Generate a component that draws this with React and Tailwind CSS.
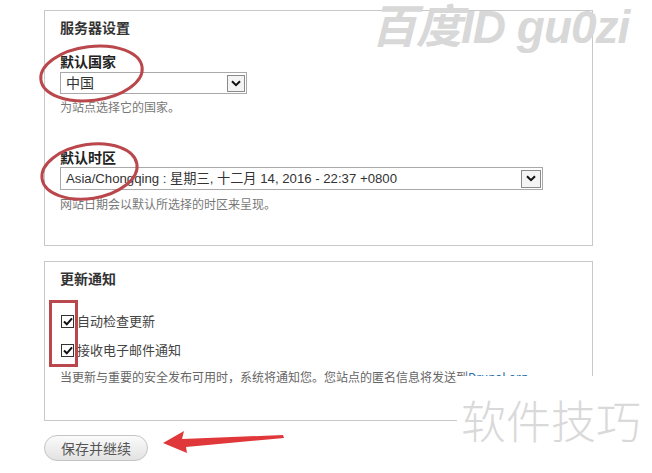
import React from "react";

function Chevron() {
  return (
    <svg width="10" height="7" viewBox="0 0 10 7">
      <path d="M1 1.2 L5 5.2 L9 1.2" fill="none" stroke="#111" strokeWidth="2" />
    </svg>
  );
}

function Select({ width, height, text, arrowW, small }) {
  return (
    <div
      className="flex items-center justify-between border border-[#a9a9a9] bg-white pl-[5px] pr-[1px]"
      style={{ width, height }}
    >
      <span
        className={
          small
            ? "text-[13.2px] leading-[18px] text-[#333] font-['Liberation_Sans','Noto_Sans_CJK_SC',sans-serif] whitespace-nowrap"
            : "text-[14px] leading-[18px] text-[#333] font-['Liberation_Sans','Noto_Sans_CJK_SC',sans-serif] whitespace-nowrap"
        }
      >
        {text}
      </span>
      <span
        className="flex items-center justify-center border border-[#8a8a8a] bg-[#f4f4f4]"
        style={{ width: arrowW, height: height - 5 }}
      >
        <Chevron />
      </span>
    </div>
  );
}

function Checkbox({ label }) {
  return (
    <div className="flex h-[20px] items-center">
      <span className="ml-[1px] flex h-[13px] w-[13px] items-center justify-center border border-[#333] bg-white">
        <svg width="10" height="9" viewBox="0 0 10 9">
          <path d="M1 4.5 L3.8 7.3 L9 1.3" fill="none" stroke="#111" strokeWidth="2" />
        </svg>
      </span>
      <span className="ml-[3px] text-[13px] leading-[20px] text-[#444]">{label}</span>
    </div>
  );
}

export default function App() {
  return (
    <div className="relative h-[473px] w-[652px] overflow-hidden bg-white font-['Noto_Sans_CJK_SC',sans-serif]">
      <div className="w-[593px] pl-[44px] pt-[10px]">
        {/* Fieldset 1 */}
        <div className="h-[236px] border border-[#c8c8c8] pl-[15px] pt-[6px]">
          <div className="h-[20px] text-[14px] font-bold leading-[20px] text-[#333]">服务器设置</div>
          <div className="mt-[14px] h-[20px] text-[14px] font-bold leading-[20px] text-[#222]">默认国家</div>
          <div className="mt-[1px]">
            <Select width={187} height={22} text="中国" arrowW={18} />
          </div>
          <div className="mt-[4px] h-[18px] text-[12px] leading-[18px] text-[#777]">为站点选择它的国家。</div>
          <div className="mt-[31px] h-[20px] text-[14px] font-bold leading-[20px] text-[#222]">默认时区</div>
          <Select width={483} height={23} text="Asia/Chongqing : 星期三, 十二月 14, 2016 - 22:37 +0800" arrowW={20} small />
          <div className="mt-[5px] h-[18px] text-[12px] leading-[18px] text-[#777]">网站日期会以默认所选择的时区来呈现。</div>
        </div>

        {/* Fieldset 2 */}
        <div className="mt-[15px] h-[160px] border border-[#c8c8c8] pl-[15px] pt-[6px]">
          <div className="h-[20px] text-[14px] font-bold leading-[20px] text-[#333]">更新通知</div>
          <div className="mt-[23px]">
            <Checkbox label="自动检查更新" />
          </div>
          <div className="mt-[9px]">
            <Checkbox label="接收电子邮件通知" />
          </div>
          <div className="mt-[8px] h-[18px] whitespace-nowrap text-[12px] leading-[18px] text-[#666]">
            当更新与重要的安全发布可用时，系统将通知您。您站点的匿名信息将发送到
            <span className="text-[#2a6fb0]">Drupal.org</span>
          </div>
        </div>

        <button className="mt-[14px] flex h-[26px] w-[104px] items-center justify-center rounded-full border border-[#c4c4c4] bg-gradient-to-b from-[#fbfbfb] to-[#e2e2e2] text-[14px] leading-[20px] text-[#555]">
          保存并继续
        </button>
      </div>

      {/* watermark top */}
      <div className="pointer-events-none absolute left-[371px] top-[-2px] whitespace-nowrap font-['Liberation_Sans','Noto_Sans_CJK_SC',sans-serif] text-[46px] font-bold italic leading-[58px] tracking-[-1px] text-[#d8d8d8]">
        百度ID gu0zi
      </div>

      {/* watermark bottom */}
      <div className="pointer-events-none absolute left-[457px] top-[376px] flex h-[97px] w-[195px] items-start bg-white pl-[4px] pt-[16px]">
        <span className="text-[45px] font-light leading-[56px] text-[#d9d9d9]">软件技巧</span>
      </div>

      {/* annotations */}
      <svg className="pointer-events-none absolute left-0 top-0" width="652" height="473">
        <ellipse cx="91.5" cy="73.5" rx="51" ry="27" fill="none" stroke="#b9474c" strokeWidth="3" transform="rotate(-7 91.5 73.5)" />
        <ellipse cx="89.5" cy="171.5" rx="48" ry="27" fill="none" stroke="#b9474c" strokeWidth="3" transform="rotate(-9 89.5 171.5)" />
        <rect x="50.5" y="301.5" width="26" height="64" fill="none" stroke="#b9474c" strokeWidth="3" />
        <polygon points="163,443 184,431 182,439 283,435 284,438 186,447 187,453" fill="#e0383a" />
      </svg>
    </div>
  );
}
